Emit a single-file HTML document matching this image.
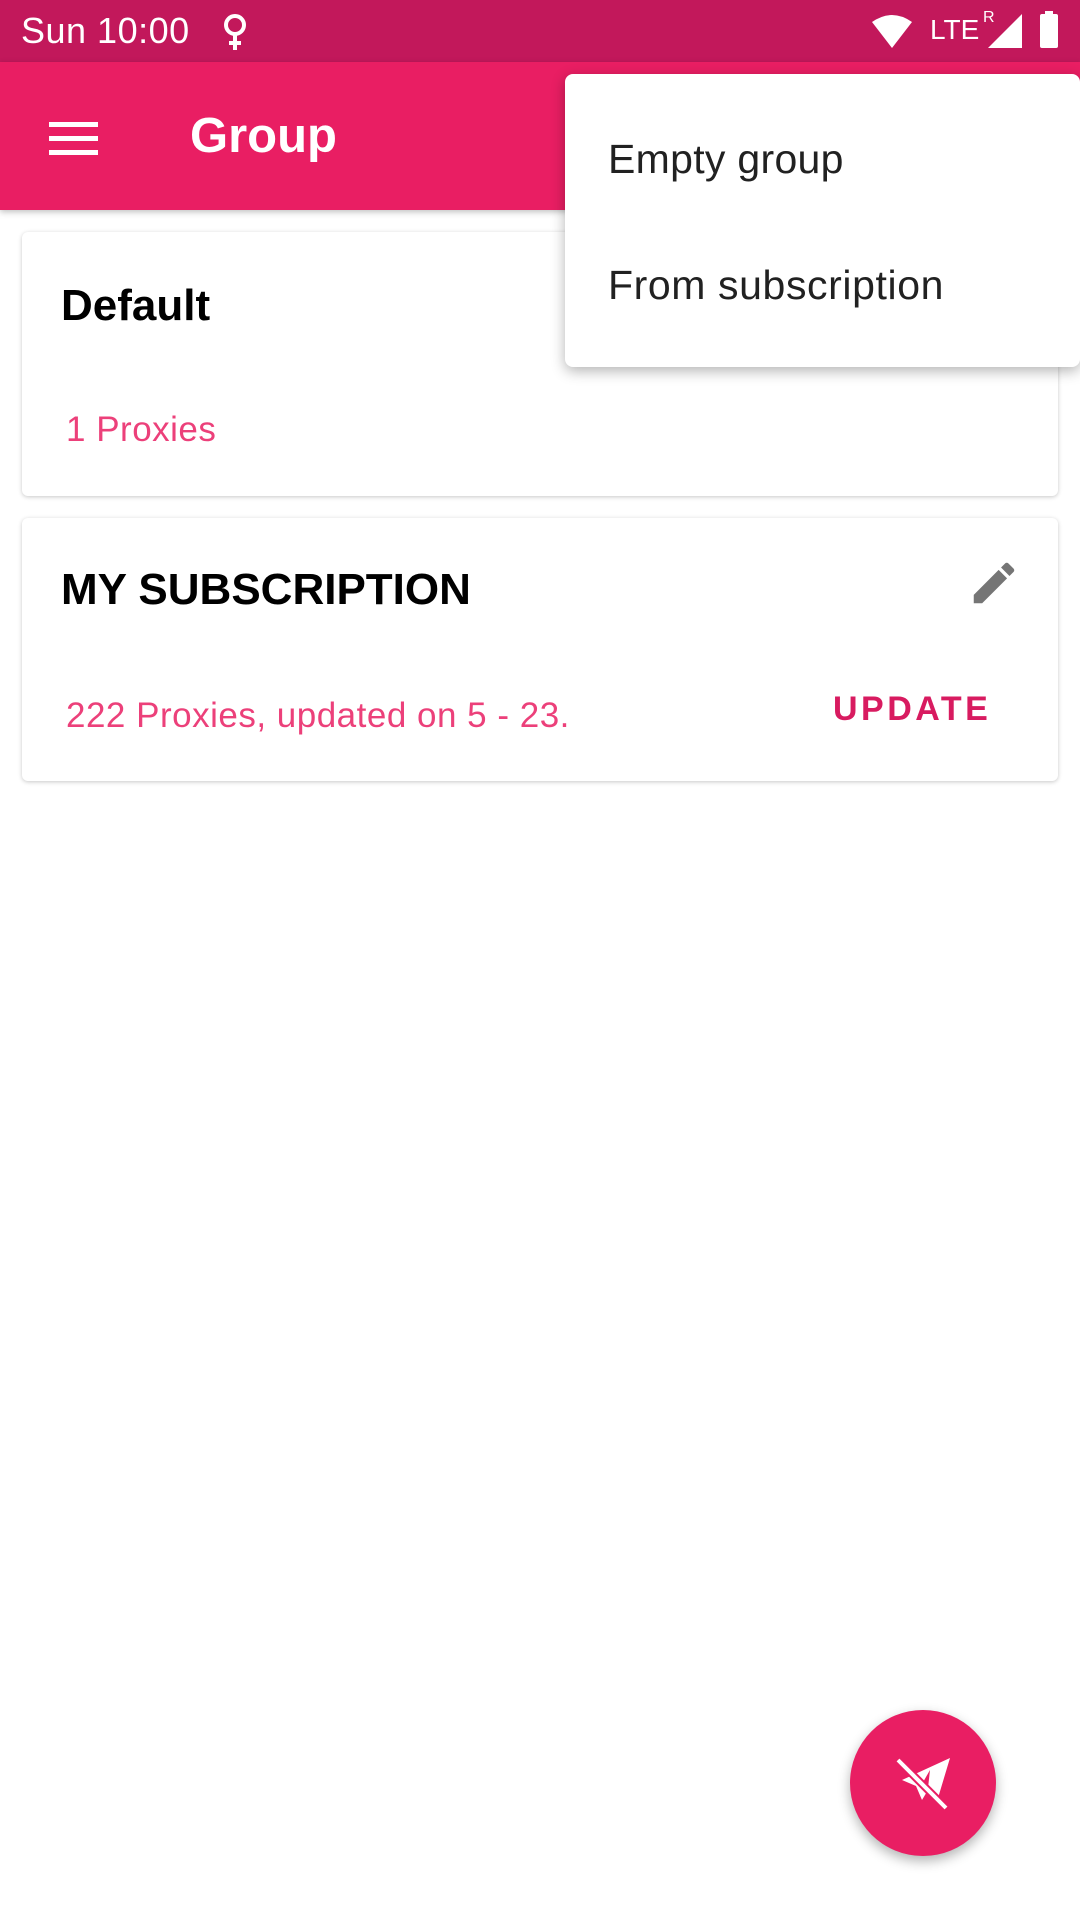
<!DOCTYPE html>
<html><head><meta charset="utf-8"><style>
*{margin:0;padding:0;box-sizing:border-box}
body{width:1080px;height:1920px;background:#fff;font-family:"Liberation Sans",sans-serif;position:relative;overflow:hidden}
.abs{position:absolute}
.sb{left:0;top:0;width:1080px;height:62px;background:#C2185B;color:#fff}
.ab{left:0;top:62px;width:1080px;height:148px;background:#E91E63;box-shadow:0 2px 6px rgba(0,0,0,.25)}
.card{left:22px;width:1036px;background:#fff;border-radius:6px;box-shadow:0 1px 4px rgba(0,0,0,.22)}
.menu{left:565px;top:74px;width:515px;height:293px;background:#fff;border-radius:8px;box-shadow:0 4px 14px rgba(0,0,0,.3)}
.t{white-space:nowrap;line-height:1}
</style></head><body>
<div class="abs sb">
 <div class="abs t" style="left:21px;top:13px;font-size:36px;letter-spacing:0.5px">Sun 10:00</div>
 <svg class="abs" style="left:220px;top:12px" width="30" height="40" viewBox="0 0 30 40"><circle cx="15" cy="13" r="9" fill="none" stroke="#fff" stroke-width="4"/><path d="M15 22v16M9 31h12" stroke="#fff" stroke-width="4"/></svg>
 <svg class="abs" style="left:872px;top:14px" width="40" height="34" viewBox="0 0 40 34"><path d="M0 8Q20 -6 40 8L20 34Z" fill="#fff"/></svg>
 <div class="abs t" style="left:930px;top:16px;font-size:28px">LTE</div>
 <div class="abs t" style="left:983px;top:10px;font-size:16px">R</div>
 <svg class="abs" style="left:988px;top:14px" width="34" height="34"><path d="M34 0V34H0Z" fill="#fff"/></svg>
 <div class="abs" style="left:1040px;top:14px;width:18px;height:34px;background:#fff;border-radius:2px"></div>
 <div class="abs" style="left:1045px;top:11px;width:8px;height:4px;background:#fff"></div>
</div>
<div class="abs ab">
 <div class="abs" style="left:49px;top:60px;width:49px;height:5px;background:#fff"></div>
 <div class="abs" style="left:49px;top:74px;width:49px;height:5px;background:#fff"></div>
 <div class="abs" style="left:49px;top:88px;width:49px;height:5px;background:#fff"></div>
 <div class="abs t" style="left:190px;top:50px;font-size:49px;color:#fff;font-weight:bold">Group</div>
</div>
<div class="abs card" style="top:232px;height:264px">
 <div class="abs t" style="left:39px;top:52px;font-size:44px;font-weight:bold;color:#000">Default</div>
 <div class="abs t" style="left:44px;top:180px;font-size:35px;color:#EC407A;letter-spacing:0.5px">1 Proxies</div>
</div>
<div class="abs card" style="top:518px;height:263px">
 <div class="abs t" style="left:39px;top:50px;font-size:44px;font-weight:bold;color:#000">MY SUBSCRIPTION</div>
 <svg class="abs" style="left:945px;top:38px" width="54" height="54" viewBox="0 0 24 24"><path d="M3 17.25V21h3.75L17.81 9.94l-3.75-3.75L3 17.25zM20.71 7.04a1 1 0 000-1.41l-2.34-2.34a1 1 0 00-1.41 0l-1.83 1.83 3.75 3.75 1.83-1.83z" fill="#757575"/></svg>
 <div class="abs t" style="left:44px;top:180px;font-size:35px;color:#EC407A;letter-spacing:0.5px">222 Proxies, updated on 5 - 23.</div>
 <div class="abs t" style="left:811px;top:174px;font-size:34px;font-weight:bold;color:#D81B60;letter-spacing:3.5px">UPDATE</div>
</div>
<div class="abs menu">
 <div class="abs t" style="left:43px;top:65px;font-size:41px;color:#212121;letter-spacing:0.3px">Empty group</div>
 <div class="abs t" style="left:43px;top:191px;font-size:41px;color:#212121;letter-spacing:0.6px">From subscription</div>
</div>
<div class="abs" style="left:850px;top:1710px;width:146px;height:146px;border-radius:50%;background:#E91E63;box-shadow:0 5px 12px rgba(0,0,0,.3)">
 <svg class="abs" style="left:40px;top:40px" width="66" height="66" viewBox="0 0 66 66"><path d="M60 8L12 30l14 6 6 14 6-10 10 8z" fill="#fff"/><path d="M40 20l-8 14 6 4z" fill="#E91E63"/><path d="M8 10L56 58" stroke="#E91E63" stroke-width="8"/><path d="M8 10L56 58" stroke="#fff" stroke-width="4"/></svg>
</div>
</body></html>
